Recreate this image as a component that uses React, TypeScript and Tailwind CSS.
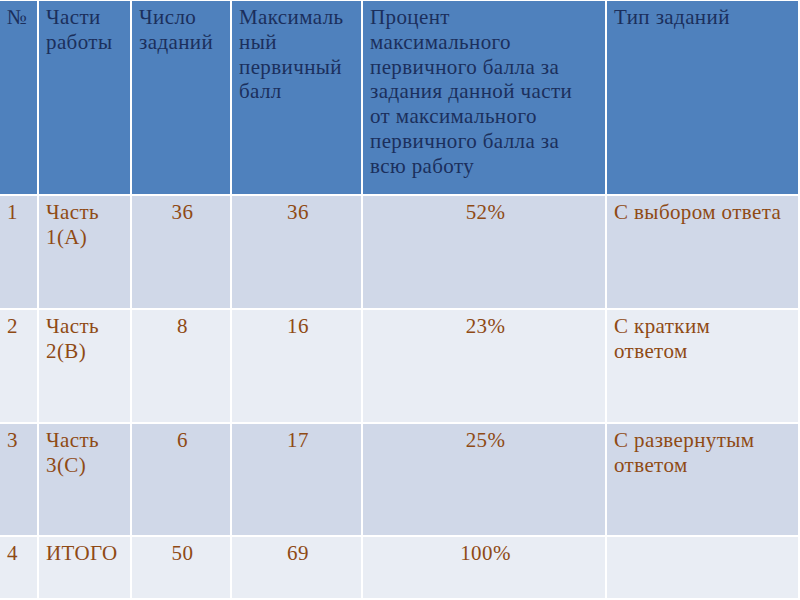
import React from "react";

const head = [
  { t: <>№</>, pr: "pr-[4px]" },
  { t: <>Части работы</>, pr: "pr-[4px]" },
  { t: <>Число заданий</>, pr: "pr-[4px]" },
  { t: <>Максималь<br />ный первичный балл</>, pr: "pr-[4px]" },
  {
    t: <>Процент максимального первичного балла за задания данной части от максимального первичного балла за всю работу</>,
    pr: "pr-[22px]",
  },
  { t: <>Тип заданий</>, pr: "pr-[12px]" },
];

const rows = [
  { bg: "bg-[#d0d8e8]", h: "h-[112px]", cells: ["1", "Часть 1(А)", "36", "36", "52%", "С выбором ответа"] },
  { bg: "bg-[#e9edf4]", h: "h-[112px]", cells: ["2", "Часть 2(В)", "8", "16", "23%", "С кратким ответом"] },
  { bg: "bg-[#d0d8e8]", h: "h-[111px]", cells: ["3", "Часть 3(С)", "6", "17", "25%", "С развернутым ответом"] },
  { bg: "bg-[#e9edf4]", h: "h-[61px]", cells: ["4", "ИТОГО", "50", "69", "100%", ""] },
];

export default function App() {
  return (
    <div className="w-[800px] h-[600px] bg-white pt-px overflow-hidden font-['Liberation_Serif',serif] text-[21px] tracking-[0.4px] leading-[24.8px]">
      <div className="w-[798px] grid grid-cols-[37px_91px_98px_129px_242px_191px] gap-[2px] bg-white">
        {/* шапка таблицы */}
        {head.map((c, i) => (
          <div key={i} className={`h-[193px] bg-[#4f81bd] text-[#1b2f5c] pl-[7px] pt-1 ${c.pr}`}>
            {c.t}
          </div>
        ))}
        {/* строки */}
        {rows.map((r) =>
          r.cells.map((c, i) => (
            <div
              key={r.cells[0] + i}
              className={`${r.bg} ${r.h} text-[#8f4a14] pl-[7px] pt-1 ${i === 5 ? "pr-[12px]" : "pr-[4px]"} ${i >= 2 && i <= 4 ? "text-center" : ""}`}
            >
              {c}
            </div>
          ))
        )}
      </div>
    </div>
  );
}
